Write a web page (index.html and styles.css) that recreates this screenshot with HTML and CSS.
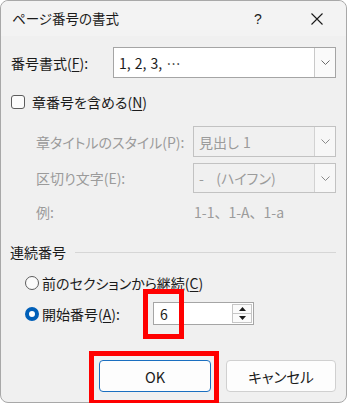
FILE: index.html
```html
<!DOCTYPE html>
<html lang="ja">
<head>
<meta charset="utf-8">
<title>ページ番号の書式</title>
<link rel="stylesheet" href="styles.css">
</head>
<body>
<div class="dialog">
  <div class="titlebar">
    <span class="title">ページ番号の書式</span>
    <span class="spacer"></span>
    <span class="help">?</span>
    <span class="close">
      <svg width="12" height="12" viewBox="0 0 12 12"><path d="M0.5 0.5 L11.5 11.5 M11.5 0.5 L0.5 11.5" stroke="#1a1a1a" stroke-width="1.1" fill="none"/></svg>
    </span>
  </div>
  <div class="content">
    <div class="row row-format">
      <span class="label label-format">番号書式(<u>F</u>):</span>
      <div class="combo">
        <span class="combo-text">1, 2, 3, …</span>
        <span class="combo-btn"><svg width="9" height="5" viewBox="0 0 9 5"><path d="M0.5 0.5 L4.5 4.5 L8.5 0.5" stroke="#6a6a6a" stroke-width="1" fill="none"/></svg></span>
      </div>
    </div>
    <div class="row row-check">
      <span class="checkbox"></span>
      <span class="label">章番号を含める(<u>N</u>)</span>
    </div>
    <div class="row row-sub row-style">
      <span class="label label-sub disabled">章タイトルのスタイル(P):</span>
      <div class="combo combo-disabled">
        <span class="combo-text">見出し 1</span>
        <span class="combo-btn"><svg width="9" height="5" viewBox="0 0 9 5"><path d="M0.5 0.5 L4.5 4.5 L8.5 0.5" stroke="#8a8a8a" stroke-width="1" fill="none"/></svg></span>
      </div>
    </div>
    <div class="row row-sub row-sep">
      <span class="label label-sub disabled">区切り文字(E):</span>
      <div class="combo combo-disabled">
        <span class="combo-text">-&nbsp;&nbsp;&nbsp;(ハイフン)</span>
        <span class="combo-btn"><svg width="9" height="5" viewBox="0 0 9 5"><path d="M0.5 0.5 L4.5 4.5 L8.5 0.5" stroke="#8a8a8a" stroke-width="1" fill="none"/></svg></span>
      </div>
    </div>
    <div class="row row-sub row-example">
      <span class="label label-ex disabled">例:</span>
      <span class="label example-value disabled">1-1、1-A、1-a</span>
    </div>
    <div class="row row-group">
      <span class="label">連続番号</span>
      <span class="group-line"></span>
    </div>
    <div class="row row-radio row-radio1">
      <span class="radio"></span>
      <span class="label">前のセクションから継続(<u>C</u>)</span>
    </div>
    <div class="row row-radio row-radio2">
      <span class="radio radio-on"></span>
      <span class="label label-start">開始番号(<u>A</u>):</span>
      <div class="spin">
        <span class="spin-text">6</span>
        <span class="spin-btns">
          <span class="spin-btn"><svg width="7" height="4" viewBox="0 0 7 4"><path d="M0 4 L3.5 0 L7 4 Z" fill="#1a1a1a"/></svg></span>
          <span class="spin-btn"><svg width="7" height="4" viewBox="0 0 7 4"><path d="M0 0 L3.5 4 L7 0 Z" fill="#1a1a1a"/></svg></span>
        </span>
        <span class="mark mark-spin"></span>
      </div>
    </div>
    <div class="row row-buttons">
      <div class="btn btn-ok">OK<span class="mark mark-ok"></span></div>
      <div class="btn btn-cancel">キャンセル</div>
    </div>
  </div>
</div>
</body>
</html>
```

FILE: styles.css
```css
* { box-sizing: border-box; }
html, body { margin: 0; padding: 0; background: #ffffff; }
body {
  font-family: "Noto Sans CJK JP", "Noto Sans", sans-serif;
  font-feature-settings: "palt";
  color: #1b1b1b;
  font-size: 14px;
}
.dialog {
  width: 347px;
  height: 403px;
  border: 1px solid #a8a8a8;
  border-radius: 8px;
  background: #f0f0f0;
  position: relative;
}
.titlebar {
  height: 35px;
  display: flex;
  align-items: center;
  padding-left: 11px;
  background: #f3f3f3;
  border-radius: 8px 8px 0 0;
}
.title { font-size: 13.5px; line-height: 1; }
.spacer { flex: 1; }
.help {
  width: 24px;
  text-align: center;
  font-family: "Liberation Sans", sans-serif;
  font-size: 14px;
}
.close {
  width: 24px;
  margin-left: 35px;
  margin-right: 17px;
  display: flex;
  justify-content: center;
  align-items: center;
}
.content { padding: 0 10px 0 9px; }
.row { display: flex; align-items: center; }
.label { line-height: 20px; white-space: nowrap; }
u { text-decoration-thickness: 1px; text-underline-offset: 2px; }
.disabled { color: #9b9b9b; }

.row-format { margin-top: 11px; height: 31px; }
.label-format { width: 103px; flex: none; padding-left: 1px; }
.combo {
  flex: 1;
  height: 100%;
  display: flex;
  align-items: stretch;
  background: #ffffff;
  border: 1px solid #a5a5a5;
}
.combo-text {
  flex: 1;
  display: flex;
  align-items: center;
  padding-left: 5px;
  font-size: 14px;
  word-spacing: 1px;
}
.combo-btn {
  width: 21px;
  flex: none;
  display: flex;
  align-items: center;
  justify-content: center;
  border-left: 1px solid #c9c9c9;
  background: #fafafa;
}
.combo-disabled {
  background: #f0f0f0;
  border-color: #c2c2c2;
  color: #9b9b9b;
}
.combo-disabled .combo-btn { background: #f7f7f7; border-left-color: #d2d2d2; }

.row-check { margin-top: 14px; height: 20px; }
.checkbox {
  width: 14px;
  height: 14px;
  margin-left: 1px;
  margin-right: 7px;
  border: 1px solid #5c5c5c;
  border-radius: 3px;
  background: #fbfbfb;
}

.row-sub { padding-left: 26px; }
.label-sub { width: 157px; flex: none; }
.row-style { margin-top: 14px; height: 31px; }
.row-sep { margin-top: 6px; height: 30px; }
.row-example { margin-top: 9px; height: 20px; }
.label-ex { width: 158px; flex: none; }
.example-value { font-feature-settings: normal; }

.row-group { margin-top: 20px; height: 20px; }
.group-line { flex: 1; height: 1px; background: #d6d6d6; margin-left: 9px; }

.row-radio { padding-left: 15px; }
.row-radio1 { margin-top: 11px; height: 20px; }
.row-radio2 { margin-top: 9px; height: 23px; }
.radio {
  width: 14px;
  height: 14px;
  flex: none;
  border-radius: 50%;
  border: 1px solid #5c5c5c;
  background: #fbfbfb;
  margin-right: 3px;
}
.radio-on {
  border: 4px solid #005fb8;
  background: #ffffff;
}
.label-start { width: 111px; flex: none; }
.spin {
  position: relative;
  width: 101px;
  height: 23px;
  display: flex;
  align-items: stretch;
  background: #ffffff;
  border: 1px solid #a5a5a5;
}
.spin-text {
  flex: 1;
  display: flex;
  align-items: center;
  padding-left: 6px;
  font-size: 14px;
}
.spin-btns {
  width: 21px;
  display: flex;
  flex-direction: column;
  padding: 1px 1px 1px 0;
}
.spin-btn {
  flex: 1;
  display: flex;
  align-items: center;
  justify-content: center;
  border: 1px solid #c6c6c6;
  background: #fbfbfb;
}
.spin-btn + .spin-btn { border-top: none; }

.row-buttons {
  margin-top: 35px;
  height: 32px;
  justify-content: flex-end;
  gap: 15px;
}
.btn {
  position: relative;
  height: 32px;
  display: flex;
  align-items: center;
  justify-content: center;
  border-radius: 4px;
  background: #fdfdfd;
  font-size: 14.5px;
}
.btn-ok { width: 112px; border: 1px solid #1a6fc0; }
.btn-cancel { width: 110px; border: 1px solid #d0d0d0; }

.mark {
  position: absolute;
  border: 5px solid #ff0000;
}
.mark-spin { left: -11px; top: -14px; width: 41px; height: 50px; }
.mark-ok { left: -11px; top: -10px; width: 130px; height: 54px; }
```
